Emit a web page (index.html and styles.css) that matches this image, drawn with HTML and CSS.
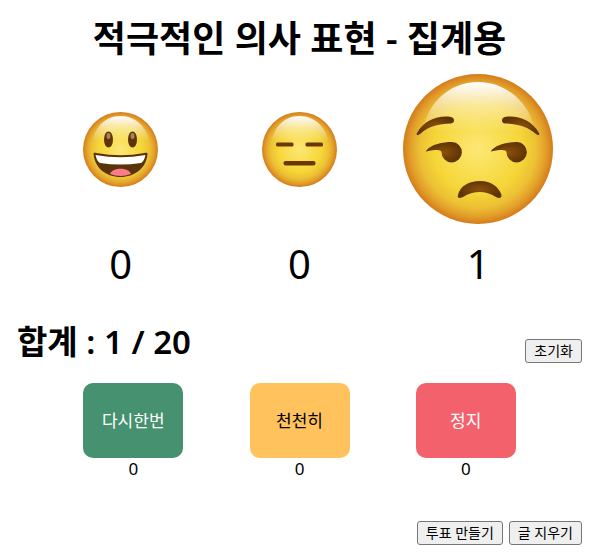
FILE: index.html
```html
<!DOCTYPE html>
<html lang="ko">
<head>
<meta charset="utf-8">
<meta name="viewport" content="width=device-width, initial-scale=1">
<title>적극적인 의사 표현 - 집계용</title>
<link rel="stylesheet" href="styles.css">
</head>
<body>
<svg class="defs" aria-hidden="true">
  <defs>
    <radialGradient id="skin" cx="75" cy="75" r="75" gradientUnits="userSpaceOnUse">
      <stop offset="0" stop-color="#fde778"/>
      <stop offset=".3" stop-color="#f9df55"/>
      <stop offset=".6" stop-color="#f5d537"/>
      <stop offset=".78" stop-color="#ecc034"/>
      <stop offset=".9" stop-color="#e2a02a"/>
      <stop offset="1" stop-color="#d57b1b"/>
    </radialGradient>
    <linearGradient id="gloss" x1="0" y1="8" x2="0" y2="58" gradientUnits="userSpaceOnUse">
      <stop offset="0" stop-color="#fff"/>
      <stop offset=".15" stop-color="#fff" stop-opacity=".85"/>
      <stop offset=".5" stop-color="#fff" stop-opacity=".45"/>
      <stop offset="1" stop-color="#fff" stop-opacity="0"/>
    </linearGradient>
    <radialGradient id="brown">
      <stop offset="0" stop-color="#8b500b"/>
      <stop offset="1" stop-color="#5f3405"/>
    </radialGradient>
    <g id="head">
      <circle cx="75" cy="75" r="75" fill="url(#skin)"/>
      <path d="M19 62C22 30 46 8 75 8s54 22 58 54z" fill="url(#gloss)"/>
    </g>
  </defs>
</svg>
<main>
  <h1 class="title">적극적인 의사 표현 - 집계용</h1>

  <section class="row">
    <div class="vote">
      <div class="stage">
        <svg class="face" viewBox="0 0 150 150" role="img" aria-label="좋음">
          <use href="#head"/>
          <ellipse cx="51" cy="55" rx="9" ry="16" fill="#5f3408"/>
          <ellipse cx="99" cy="55" rx="9" ry="16" fill="#5f3408"/>
          <ellipse cx="51" cy="48" rx="4" ry="6" fill="#a9825c"/>
          <ellipse cx="99" cy="48" rx="4" ry="6" fill="#a9825c"/>
          <path d="M21 84C21 81 24 81 27 82Q75 91 123 82C127 81 130 81 129 85C126 113 103 130 75 130S24 113 21 84z" fill="#5a3408"/>
          <path d="M25 86Q75 95 125 86C123 94 121 99 116 102Q75 108 34 102C29 99 27 94 25 86z" fill="#fff"/>
          <path d="M54 124C59 110 91 110 96 124Q75 132 54 124z" fill="#fb7d8c"/>
        </svg>
      </div>
      <span class="score">0</span>
    </div>
    <div class="vote">
      <div class="stage">
        <svg class="face" viewBox="0 0 150 150" role="img" aria-label="보통">
          <use href="#head"/>
          <rect x="28" y="61" width="35" height="8" rx="3" fill="#6b3805"/>
          <rect x="87" y="61" width="35" height="8" rx="3" fill="#6b3805"/>
          <rect x="43" y="98" width="64" height="9" rx="4" fill="#6b3805"/>
        </svg>
      </div>
      <span class="score">0</span>
    </div>
    <div class="vote">
      <div class="stage">
        <svg class="face face-lead" viewBox="0 0 150 150" role="img" aria-label="싫음">
          <use href="#head"/>
          <g fill="url(#brown)">
            <path d="M14 59C21 46 36 41 48 43C52 44 52 49 48 49.500C35 50 26 52 17 60C14 62 13 61 14 59z"/>
            <path d="M136 59C129 46 114 41 102 43C98 44 98 49 102 49.500C115 50 124 52 133 60C136 62 137 61 136 59z"/>
            <path d="M23 77C28 70 40 68 49 68A10.200 10.200 0 1 1 38.500 78C38 76 35 75 23 77.500z"/>
            <path d="M88 77C93 70 105 68 114 68A10.200 10.200 0 1 1 103.500 78C103 76 100 75 88 77.500z"/>
            <path d="M55 121C57 112 66 107 77 107S96 113 98.500 121C99 124 96 125 93 123C82 116 70 117 60 123C56 125 54 124 55 121z"/>
          </g>
        </svg>
      </div>
      <span class="score">1</span>
    </div>
  </section>

  <div class="summary">
    <h2 class="total">합계 : 1 / 20</h2>
    <button class="tool" type="button">초기화</button>
  </div>

  <section class="row">
    <div class="signal">
      <button class="card again" type="button">다시한번</button>
      <span>0</span>
    </div>
    <div class="signal">
      <button class="card slow" type="button">천천히</button>
      <span>0</span>
    </div>
    <div class="signal">
      <button class="card stop" type="button">정지</button>
      <span>0</span>
    </div>
  </section>

  <footer class="actions">
    <button class="tool" type="button">투표 만들기</button>
    <button class="tool" type="button">글 지우기</button>
  </footer>
</main>
</body>
</html>
```
FILE: styles.css
```css
body {
  margin: 0;
  background: #fff;
  color: #000;
  font: 17px/22px "Noto Sans", "Noto Sans CJK KR", sans-serif;
}

main {
  padding: 15px 27px 0 17px;
}

.defs {
  position: absolute;
  width: 0;
  height: 0;
}

.title {
  margin: 0 0 11px;
  font-size: 36px;
  font-weight: 600;
  line-height: 48px;
  text-align: center;
}

.row {
  display: flex;
  justify-content: space-evenly;
}

.vote,
.signal {
  display: flex;
  flex-direction: column;
  align-items: center;
}

.stage {
  display: flex;
  align-items: center;
  justify-content: center;
  width: 150px;
  height: 150px;
}

.face {
  width: 75px;
  height: 75px;
}

.face-lead {
  width: 150px;
  height: 150px;
}

.score {
  margin-top: 12px;
  font-size: 40px;
  line-height: 56px;
}

.summary {
  display: flex;
  align-items: flex-end;
  justify-content: space-between;
  margin: 29px 0 20px;
}

.total {
  margin: 0;
  font-size: 33px;
  font-weight: 600;
  line-height: 42px;
}

.tool {
  height: 24px;
  padding: 0 8px;
  border: 1px solid #767676;
  border-radius: 3px;
  background: #efefef;
  color: #000;
  font: 14px/20px "Noto Sans", "Noto Sans CJK KR", sans-serif;
}

.card {
  width: 100px;
  height: 75px;
  padding: 0;
  border: 0;
  border-radius: 10px;
  color: #fff;
  font: inherit;
}

.again {
  background: #459170;
}

.slow {
  background: #ffc25c;
  color: #000;
}

.stop {
  background: #f3626c;
}

.actions {
  display: flex;
  justify-content: flex-end;
  gap: 6px;
  margin-top: 41px;
}
```
